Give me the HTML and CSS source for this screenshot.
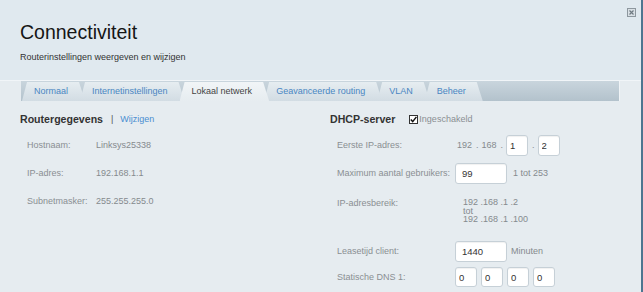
FILE: index.html
```html
<!DOCTYPE html>
<html lang="nl">
<head>
  <meta charset="UTF-8">
  <meta name="viewport" content="width=device-width, initial-scale=1.0">
  <title>Connectiviteit</title>
  <link rel="stylesheet" href="styles.css">
</head>
<body>

<div class="window">
  <button class="close" type="button" aria-label="Sluiten">
    <svg width="9" height="9" viewBox="0 0 9 9">
      <rect x="0.5" y="0.5" width="8" height="8" fill="#d9e0e5" stroke="#8d979e"/>
      <path d="M2.5 2.5 L6.5 6.5 M6.5 2.5 L2.5 6.5" stroke="#6f7a82" stroke-width="1.2"/>
    </svg>
  </button>

  <header class="header">
    <h1>Connectiviteit</h1>
    <p>Routerinstellingen weergeven en wijzigen</p>
  </header>

  <nav class="tabs">
    <a class="tab" href="#">Normaal</a>
    <a class="tab" href="#">Internetinstellingen</a>
    <a class="tab active" href="#">Lokaal netwerk</a>
    <a class="tab" href="#">Geavanceerde routing</a>
    <a class="tab" href="#">VLAN</a>
    <a class="tab" href="#">Beheer</a>
  </nav>

  <main class="content">
    <!-- Routergegevens -->
    <section class="panel panel-left">
      <div class="panel-head">
        <h2>Routergegevens</h2>
        <span class="sep">|</span>
        <a class="link" href="#">Wijzigen</a>
      </div>
      <div class="row">
        <span class="label">Hostnaam:</span>
        <span class="value">Linksys25338</span>
      </div>
      <div class="row">
        <span class="label">IP-adres:</span>
        <span class="value">192.168.1.1</span>
      </div>
      <div class="row">
        <span class="label">Subnetmasker:</span>
        <span class="value">255.255.255.0</span>
      </div>
    </section>

    <!-- DHCP-server -->
    <section class="panel panel-right">
      <div class="panel-head">
        <h2>DHCP-server</h2>
        <label class="check">
          <span class="box">
            <svg width="9" height="9" viewBox="0 0 9 9">
              <rect x="0.5" y="0.5" width="8" height="8" fill="#fff" stroke="#333"/>
              <path d="M1.8 4.6 L3.7 6.6 L7.4 1.9" fill="none" stroke="#111" stroke-width="1.5"/>
            </svg>
          </span>
          Ingeschakeld
        </label>
      </div>

      <div class="row">
        <span class="label">Eerste IP-adres:</span>
        <span class="value ip-line">
          <span class="octet">192</span><span class="dot">.</span><span class="octet">168</span><span class="dot">.</span><input class="field small" type="text" value="1"><span class="dot">.</span><input class="field small" type="text" value="2">
        </span>
      </div>
      <div class="row">
        <span class="label">Maximum aantal gebruikers:</span>
        <span class="value">
          <input class="field wide" type="text" value="99"><span class="unit">1 tot 253</span>
        </span>
      </div>
      <div class="row row-range">
        <span class="label">IP-adresbereik:</span>
        <span class="range">
          192 .168 .1 .2<br>
          tot<br>
          192 .168 .1 .100
        </span>
      </div>
      <div class="row row-short">
        <span class="label">Leasetijd client:</span>
        <span class="value">
          <input class="field wide" type="text" value="1440"><span class="unit unit-near">Minuten</span>
        </span>
      </div>
      <div class="row row-short">
        <span class="label">Statische DNS 1:</span>
        <span class="value dns">
          <input class="field small" type="text" value="0">
          <input class="field small" type="text" value="0">
          <input class="field small" type="text" value="0">
          <input class="field small" type="text" value="0">
        </span>
      </div>
    </section>
  </main>
</div>

</body>
</html>
```

FILE: styles.css
```css
body {
  margin: 0;
  font-family: 'Liberation Sans', Arial, sans-serif;
  background-color: #e6ecf0;
}

.window {
  position: relative;
  width: 641px;
  height: 292px;
  overflow: hidden;
  background-color: #e6ecf0;
  border-right: 2px solid #4d7590;
}

.close {
  position: absolute;
  top: 8px;
  right: 5px;
  padding: 0;
  border: none;
  background: none;
  line-height: 0;
  cursor: pointer;
}

.header {
  height: 81px;
  padding: 21px 0 0 20px;
  box-sizing: border-box;
  background-color: #e0e9ef;
  border-bottom: 1px solid #f1f5f8;
}

h1 {
  margin: 0;
  font-size: 19.5px;
  font-weight: normal;
  line-height: 22px;
  color: #151515;
}

.header p {
  margin: 9px 0 0;
  font-size: 9px;
  color: #333;
}

.tabs {
  display: flex;
  height: 20px;
  margin-left: 21px;
  width: 599px;
  padding: 1px 0 0 1px;
  box-sizing: border-box;
  background: linear-gradient(#c9d5dd, #b3c2cc);
  border-right: 1px solid #f0f4f7;
}

.tab {
  display: block;
  height: 19px;
  line-height: 19px;
  padding: 0 17px 0 12px;
  margin-right: -5px;
  font-size: 9px;
  color: #4a86c2;
  text-decoration: none;
  white-space: nowrap;
  background: linear-gradient(#e6edf1, #d2dce3);
  clip-path: polygon(0 100%, 5px 0, calc(100% - 6px) 0, 100% 100%);
}

.tab.active {
  z-index: 1;
  color: #444;
  background: linear-gradient(#f1f5f7, #e6ecf0);
}

.content {
  display: grid;
  grid-template-columns: 310px 1fr;
  padding: 6px 0 0 20px;
}

.panel-head {
  display: flex;
  align-items: center;
  height: 24px;
}

h2 {
  margin: 0;
  font-size: 10.6px;
  font-weight: bold;
  color: #333;
}

.sep {
  margin: 0 7px 0 8px;
  font-size: 9px;
  color: #555;
}

.link {
  font-size: 9px;
  color: #4a8ed0;
  text-decoration: none;
}

.check {
  display: flex;
  align-items: center;
  margin-left: 14px;
  font-size: 9px;
  color: #8a8f93;
}

.box {
  line-height: 0;
  margin-right: 1px;
}

.row {
  display: flex;
  align-items: center;
  height: 28px;
  padding-left: 7px;
  font-size: 9px;
}

.label {
  flex: none;
  color: #8a8f93;
}

.panel-left .label {
  width: 69px;
}

.panel-right .label {
  width: 118px;
}

.value {
  display: flex;
  align-items: center;
  color: #858a8e;
}

.ip-line .octet:first-child {
  margin-left: 2px;
}

.dot {
  margin: 0 3px 0 4px;
}

.field {
  height: 21px;
  box-sizing: border-box;
  border: 1px solid #c6d0d7;
  border-radius: 3px;
  background-color: #fff;
  box-shadow: inset 0 1px 1px rgba(0, 0, 0, 0.06);
  font-family: 'Liberation Sans', Arial, sans-serif;
  font-size: 9.5px;
  color: #333;
  margin: 0;
}

.field.small {
  width: 22px;
  padding: 0 3px;
}

.field.wide {
  width: 52px;
  padding: 0 6px;
}

.unit {
  margin-left: 6px;
}

.unit-near {
  margin-left: 4px;
}

.row-range {
  align-items: flex-start;
  height: 51px;
  padding-top: 11px;
  box-sizing: border-box;
}

.range {
  margin-left: 8px;
  line-height: 8.5px;
  color: #858a8e;
}

.row-short {
  height: 26px;
}

.dns {
  gap: 4px;
}

.dns .field {
  width: 22px;
}

.panel-right .row-short .field.small {
  height: 20px;
}
```
